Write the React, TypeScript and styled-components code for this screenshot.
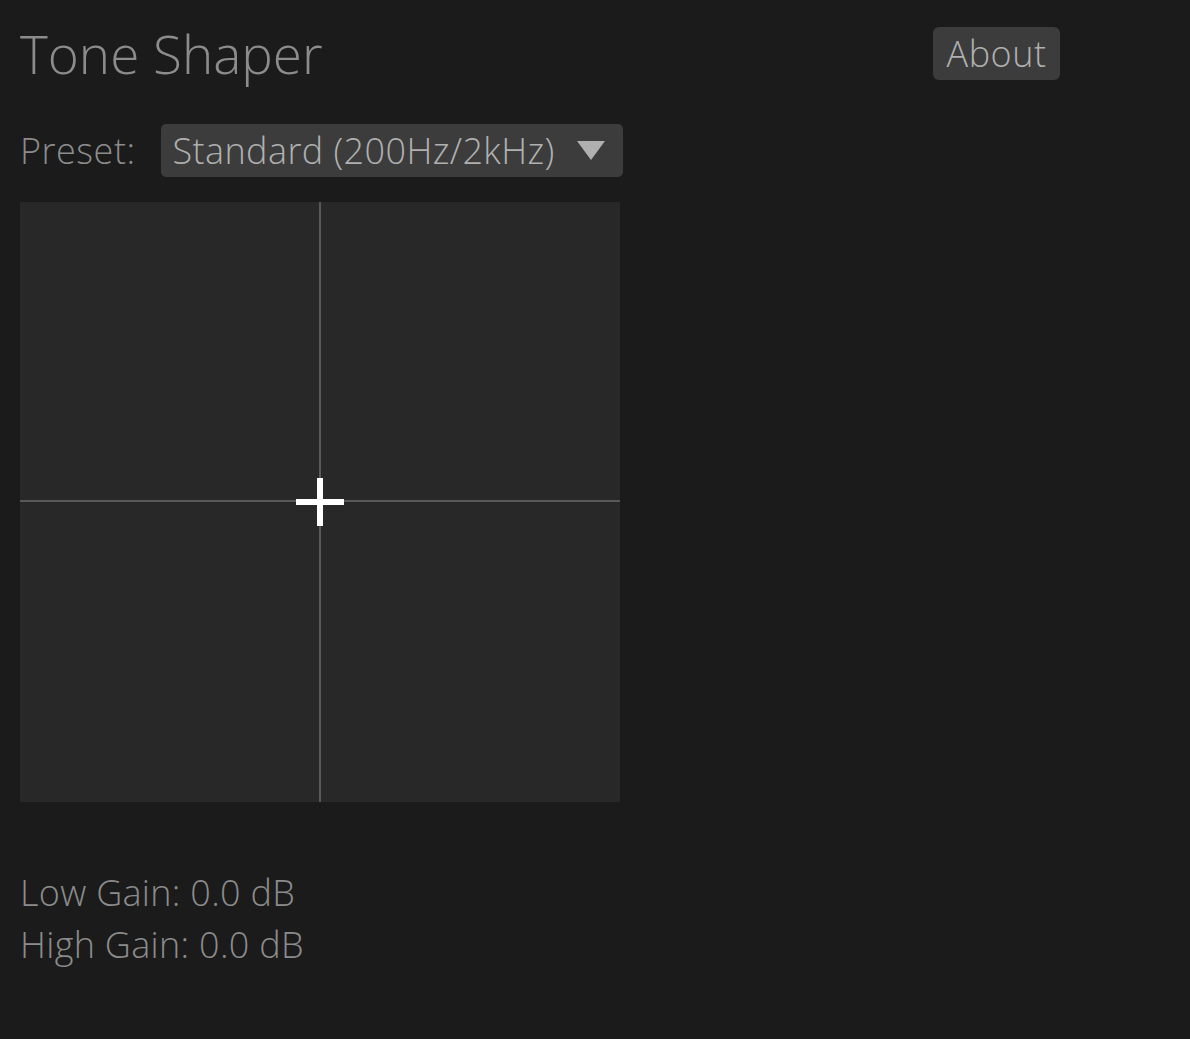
import React from "react";
import styled, { createGlobalStyle } from "styled-components";

const Global = createGlobalStyle`
  html, body { margin: 0; padding: 0; background: #1b1b1b; }
  body { font-family: "Open Sans", "Noto Sans", sans-serif; font-weight: 300; }
`;

const Page = styled.div`
  display: flex;
  flex-direction: column;
  padding: 27px 20px 0 20px;
  width: 1040px;
`;

const Header = styled.div`
  display: flex;
  align-items: center;
  justify-content: space-between;
  height: 53px;
`;

const Title = styled.h1`
  margin: 0;
  font-size: 53px;
  font-weight: 300;
  color: #8c8c8c;
  line-height: 53px;
`;

const AboutButton = styled.button`
  width: 127px;
  height: 53px;
  border: none;
  border-radius: 6px;
  background: #3c3c3c;
  color: #b0b0b0;
  font-family: inherit;
  font-weight: 300;
  font-size: 36px;
  letter-spacing: 0.5px;
  padding: 0;
  display: flex;
  align-items: center;
  justify-content: center;
`;

const PresetRow = styled.div`
  display: flex;
  align-items: center;
  gap: 25px;
  margin-top: 44px;
  height: 53px;
`;

const Label = styled.span`
  font-size: 36px;
  letter-spacing: 0.5px;
  color: #8c8c8c;
`;

const Select = styled.div`
  display: flex;
  align-items: center;
  justify-content: space-between;
  box-sizing: border-box;
  width: 462px;
  height: 53px;
  padding: 0 18px 0 12px;
  border-radius: 5px;
  background: #3c3c3c;
  color: #b0b0b0;
  font-size: 36px;
  letter-spacing: 0.4px;
`;

const Pad = styled.div`
  position: relative;
  margin-top: 25px;
  width: 600px;
  height: 600px;
  background: #282828;
`;

const VLine = styled.div`
  position: absolute;
  left: 299px;
  top: 0;
  width: 2px;
  height: 100%;
  background: #595959;
`;

const HLine = styled.div`
  position: absolute;
  top: 298px;
  left: 0;
  height: 2px;
  width: 100%;
  background: #595959;
`;

const Cross = styled.svg`
  position: absolute;
  left: 276px;
  top: 276px;
`;

const Readouts = styled.div`
  display: flex;
  flex-direction: column;
  margin-top: 65px;
`;

const Readout = styled.div`
  font-size: 36px;
  letter-spacing: 0.3px;
  line-height: 52px;
  color: #8c8c8c;
`;

export default function App() {
  return (
    <>
      <Global />
      <Page>
        <Header>
          <Title>Tone Shaper</Title>
          <AboutButton>About</AboutButton>
        </Header>
        <PresetRow>
          <Label>Preset:</Label>
          <Select>
            <span>Standard (200Hz/2kHz)</span>
            <svg width="28" height="19" viewBox="0 0 28 19">
              <polygon points="0,0 28,0 14,19" fill="#b0b0b0" />
            </svg>
          </Select>
        </PresetRow>
        <Pad>
          <VLine />
          <HLine />
          <Cross width="48" height="48" viewBox="0 0 48 48">
            <rect x="0" y="21" width="48" height="6" fill="#ffffff" />
            <rect x="21" y="0" width="6" height="48" fill="#ffffff" />
          </Cross>
        </Pad>
        <Readouts>
          <Readout>Low Gain: 0.0 dB</Readout>
          <Readout>High Gain: 0.0 dB</Readout>
        </Readouts>
      </Page>
    </>
  );
}
